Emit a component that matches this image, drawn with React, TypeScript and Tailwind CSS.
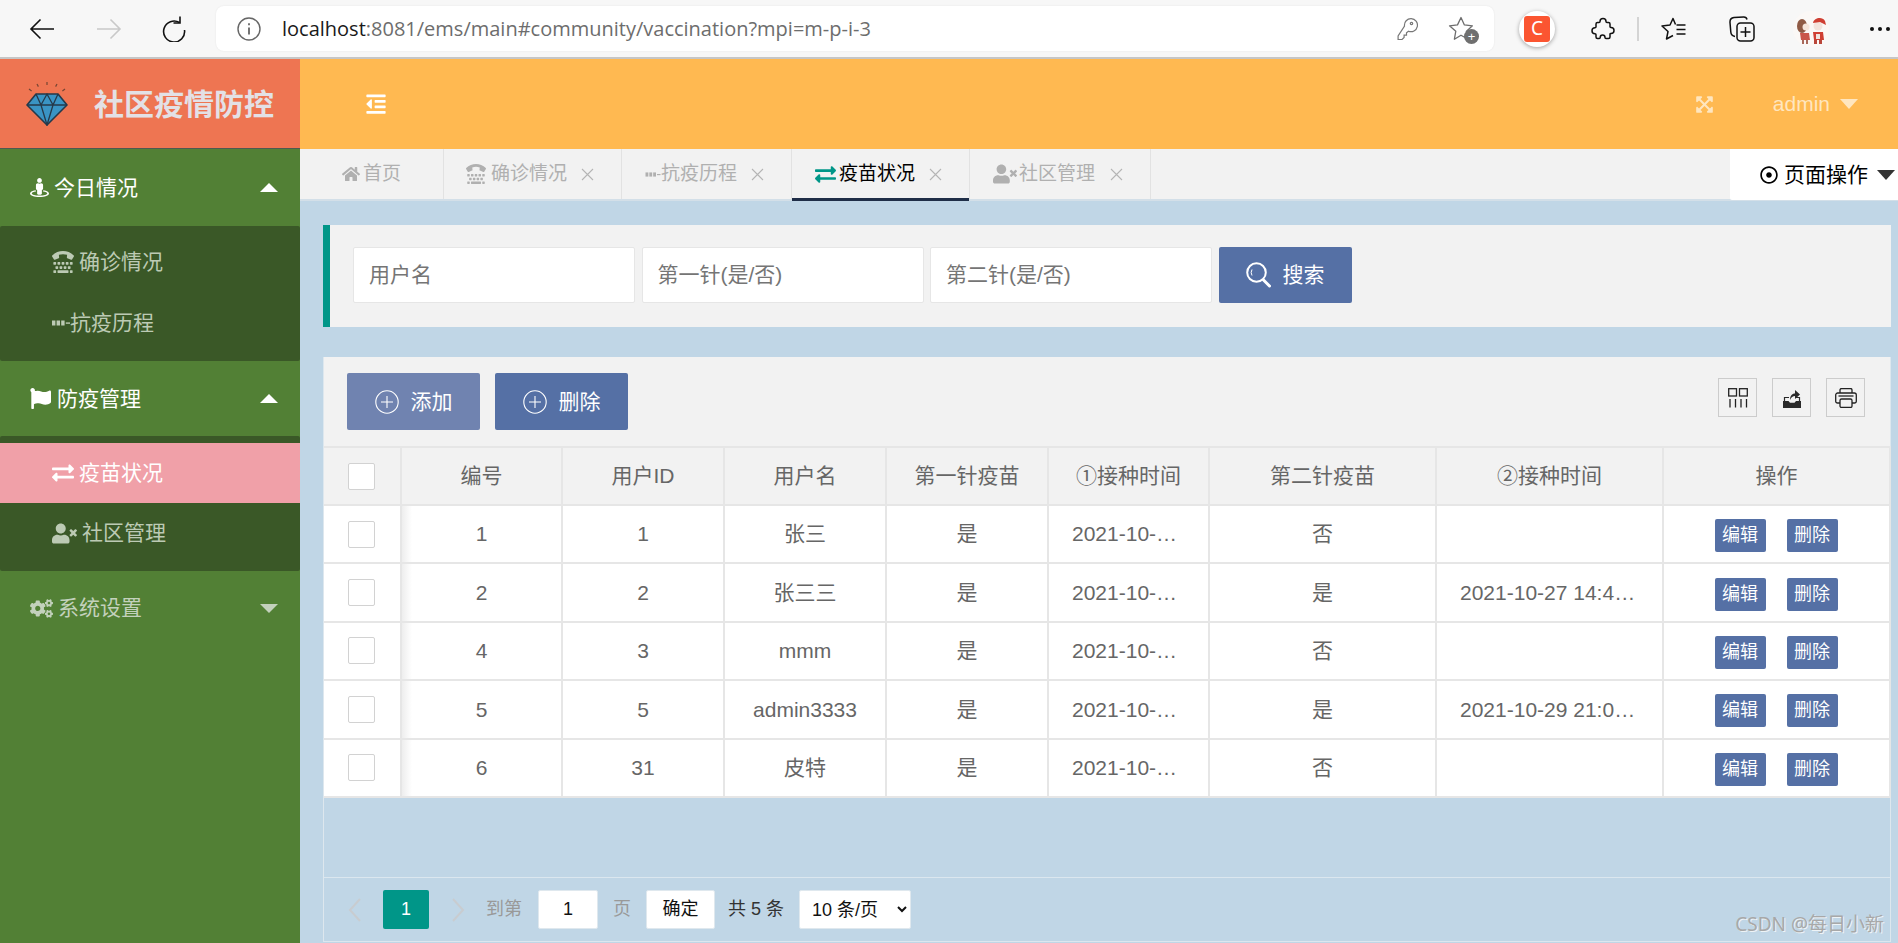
import { FaCogs, FaExchangeAlt, FaExpandArrowsAlt, FaFlag, FaHome, FaOutdent, FaRegDotCircle, FaStreetView, FaTty, FaUserTimes } from "react-icons/fa";

const rows = [
  { id: 1, uid: 1, name: "张三", first: "是", firstAt: "2021-10-26 10:00:00", second: "否", secondAt: "" },
  { id: 2, uid: 2, name: "张三三", first: "是", firstAt: "2021-10-26 10:00:00", second: "是", secondAt: "2021-10-27 14:42:11" },
  { id: 4, uid: 3, name: "mmm", first: "是", firstAt: "2021-10-27 09:30:00", second: "否", secondAt: "" },
  { id: 5, uid: 5, name: "admin3333", first: "是", firstAt: "2021-10-28 15:20:00", second: "是", secondAt: "2021-10-29 21:06:35" },
  { id: 6, uid: 31, name: "皮特", first: "是", firstAt: "2021-10-29 11:10:00", second: "否", secondAt: "" },
];

const headers = ["编号", "用户ID", "用户名", "第一针疫苗", "①接种时间", "第二针疫苗", "②接种时间", "操作"];

// the "抗疫历程" glyph: a few square dots running into a line
function DotsIcon({ className }: { className?: string }) {
  return (
    <svg viewBox="0 0 18 6" width="18" height="6" fill="currentColor" className={className}>
      <rect x="0" y="0.5" width="3.4" height="5" />
      <rect x="4.6" y="0.5" width="3.4" height="5" />
      <rect x="9.2" y="0.5" width="3.4" height="5" />
      <rect x="13.8" y="2.4" width="4.2" height="1.4" />
    </svg>
  );
}

function CloseIcon() {
  return (
    <svg viewBox="0 0 13 13" width="13" height="13" fill="none" stroke="#b5b5b5" strokeWidth="1.1">
      <path d="M1 1l11 11M12 1L1 12" />
    </svg>
  );
}

function PlusCircle() {
  return (
    <svg viewBox="0 0 24 24" width="24" height="24" fill="none" stroke="currentColor" strokeWidth="1.1">
      <circle cx="12" cy="12" r="11.2" />
      <path d="M12 6v12M6 12h12" />
    </svg>
  );
}

function Diamond() {
  return (
    <svg viewBox="0 0 42 44" width="42" height="44">
      <g stroke="#5a3a2c" strokeWidth="1.2" opacity="0.8">
        <path d="M21 0v3M11 2l1.4 2.6M31 2l-1.4 2.6M3 7l2.6 2M39 7l-2.6 2" />
      </g>
      <path d="M10 12h22l9 11-20 20L1 23z" fill="#3a94c4" stroke="#25394a" strokeWidth="1.6" strokeLinejoin="round" />
      <path d="M1 23h40M10 12l5 11 6 20 6-20 5-11M15 23l6-11 6 11" fill="none" stroke="#25394a" strokeWidth="1.3" />
    </svg>
  );
}

function BrowserBar() {
  return (
    <div className="flex h-[59px] shrink-0 items-start border-b-2 border-[#c6c6c6] bg-[#f7f7f7]">
      <div className="flex h-[57px] w-[216px] items-center pl-[30px] text-black">
        <svg viewBox="0 0 26 22" width="26" height="22" fill="none" stroke="#111" strokeWidth="1.6" className="ml-[-1px]">
          <path d="M25 11H2M11.5 1.5L2 11l9.5 9.5" />
        </svg>
        <svg viewBox="0 0 26 22" width="26" height="22" fill="none" stroke="#c9c9c9" strokeWidth="1.6" className="ml-[41px]">
          <path d="M1 11h23M14.5 1.5L24 11l-9.5 9.5" />
        </svg>
        <svg viewBox="0 0 26 26" width="26" height="26" fill="none" stroke="#111" strokeWidth="1.6" className="ml-[39px]">
          <path d="M18.500 6.500A10.500 10.500 0 1 0 23.500 14" />
          <path d="M19 0.500v6.500h-6.500" />
        </svg>
      </div>
      <div className="mt-[6px] flex h-[45px] w-[1278px] items-center rounded-lg bg-white pl-[21px] pr-[12px] shadow-[0_0_2px_rgba(0,0,0,0.08)]">
        <svg viewBox="0 0 24 24" width="24" height="24" fill="none" stroke="#666" strokeWidth="1.4">
          <circle cx="12" cy="12" r="11" />
          <path d="M12 10.5v7M12 6.3v2" strokeWidth="1.8" />
        </svg>
        <span className="ml-[21px] font-['Open_Sans','Noto_Sans',sans-serif] text-[20px] text-[#6d6d6d]">
          <span className="text-[#1a1a1a]">localhost</span>:8081/ems/main#community/vaccination?mpi=m-p-i-3
        </span>
        <svg viewBox="0 0 22 24" width="22" height="24" fill="none" stroke="#777" strokeWidth="1.2" className="ml-auto mr-[30px]">
          <path d="M9 9.5a6.5 6.5 0 1 1 4 5.2l-2 1.6v2.4H8.6V21l-2 2H2.6v-3.6z" transform="translate(-0.5 -0.5)" />
          <circle cx="15.5" cy="6.5" r="1.2" />
        </svg>
        <div className="relative mr-[6px] h-[26px] w-[28px]">
          <svg viewBox="0 0 28 26" width="28" height="26" fill="none" stroke="#6e6e6e" strokeWidth="1.3">
            <path d="M13 1.5l3.4 7.4 8 .9-5.9 5.4 1.6 8-7.1-4-6.6 4 1.4-8L1.5 9.8l8-.9z" strokeLinejoin="round" />
          </svg>
          <div className="absolute bottom-[-2px] right-[-3px] flex h-[15px] w-[15px] items-center justify-center rounded-full bg-[#6f6f6f] text-[13px] leading-none text-white">+</div>
        </div>
      </div>
      <div className="flex h-[57px] flex-1 items-center">
        <div className="ml-[25px] flex h-[36px] w-[36px] items-center justify-center rounded-full bg-white shadow-[0_1px_4px_rgba(0,0,0,0.35)]">
          <div className="flex h-[26px] w-[26px] items-center justify-center rounded-[3px] bg-[#fb5531] font-['Noto_Sans',sans-serif] text-[19px] leading-none text-white">C</div>
        </div>
        <svg viewBox="0 0 24 24" width="24" height="24" fill="none" stroke="#111" strokeWidth="1.5" className="ml-[36px]">
          <path d="M9 4.5a3 3 0 0 1 6 0c0 .6.4 1 1 1h1.5A1.5 1.5 0 0 1 19 7v2.5c0 .6.4 1 1 .9a3 3 0 0 1 0 6c-.6-.1-1 .3-1 .9V20a1.5 1.5 0 0 1-1.5 1.5H15c-.6 0-1-.4-1-1a2.4 2.4 0 0 0-4.800 0c0 .6-.4 1-1 1H6.500A1.500 1.500 0 0 1 5 20v-2.200c0-.6-.4-1-1-1a3 3 0 0 1 0-6c.6 0 1-.4 1-1V7a1.500 1.500 0 0 1 1.500-1.500H8c.6 0 1-.4 1-1z" />
        </svg>
        <div className="ml-[22px] h-[24px] w-[2px] bg-[#d4d4d4]" />
        <svg viewBox="0 0 26 24" width="26" height="24" fill="none" stroke="#111" strokeWidth="1.5" className="ml-[22px]">
          <path d="M14.500 7.500L12 1.500 9 8l-8 1 6 5.500L5.500 22l6.500-3.500" strokeLinejoin="round" />
          <path d="M15.500 8h9M15.500 12.500h9M15.500 17h9" />
        </svg>
        <svg viewBox="0 0 26 26" width="26" height="26" fill="none" stroke="#111" strokeWidth="1.5" className="ml-[42px]">
          <path d="M6 20.500C3.500 20 2 18.500 1.800 16L1 6.500C.8 3.500 2.500 1.800 5 1.500l9.500-.6c2-.1 3.200 1 3.500 2.600" />
          <rect x="8" y="7" width="17" height="18" rx="3.500" />
          <path d="M16.500 11v10M11.500 16h10" />
        </svg>
        <svg viewBox="0 0 36 36" width="36" height="36" className="ml-[38px]">
          <circle cx="18" cy="18" r="18" fill="#fbf8f6" />
          <ellipse cx="9" cy="15" rx="5" ry="7" fill="#8f5a45" />
          <circle cx="13" cy="16" r="3.500" fill="#f5e4da" />
          <path d="M7 22h9l1 7H8z" fill="#c9564a" />
          <path d="M9 29h2v4H9zM13 29h2v4h-2z" fill="#a9685a" />
          <circle cx="25" cy="15" r="4.500" fill="#f3e3dc" />
          <path d="M20 12c1-5 9-7 12-2l1 4-6-3z" fill="#cf3f33" />
          <path d="M20 21h10l1 8H21z" fill="#cf3f33" />
          <rect x="23" y="23" width="4" height="5" fill="#efe4de" />
          <path d="M21 29h3v4h-3zM26 29h3v4h-3z" fill="#b9463a" />
        </svg>
        <div className="ml-[41px] flex gap-[4px]">
          <div className="h-[4px] w-[4px] rounded-full bg-[#111]" />
          <div className="h-[4px] w-[4px] rounded-full bg-[#111]" />
          <div className="h-[4px] w-[4px] rounded-full bg-[#111]" />
        </div>
      </div>
    </div>
  );
}

function Sidebar() {
  return (
    <aside className="flex w-[300px] shrink-0 flex-col bg-[#528035] text-[21px]">
      <div className="flex h-[90px] shrink-0 items-center border-b border-[#4d5a50] bg-[#ee7552]">
        <div className="ml-[26px] mt-[1px]">
          <Diamond />
        </div>
        <span className="ml-[26px] mt-[2px] text-[30px] font-bold leading-none text-[#e3e1e6]">社区疫情防控</span>
      </div>

      <div className="flex h-[77px] items-center pl-[30px] pr-[22px] text-white">
        <FaStreetView size={19} className="mr-[5px]" />
        <span>今日情况</span>
        <div className="ml-auto border-x-[9px] border-b-[9px] border-x-transparent border-b-white" />
      </div>
      <div className="rounded-[2px] bg-[#3a5827] pb-[8px] pt-[6px] text-[#bccab4]">
        <div className="flex h-[60px] items-center pl-[52px]">
          <FaTty size={22} className="mr-[5px]" />
          <span>确诊情况</span>
        </div>
        <div className="flex h-[61px] items-center pl-[52px]">
          <DotsIcon />
          <span>抗疫历程</span>
        </div>
      </div>

      <div className="flex h-[75px] items-center pl-[30px] pr-[22px] text-white">
        <FaFlag size={21} className="mr-[6px]" />
        <span>防疫管理</span>
        <div className="ml-auto border-x-[9px] border-b-[9px] border-x-transparent border-b-white" />
      </div>
      <div className="rounded-[2px] bg-[#3a5827] pb-[8px] pt-[7px] text-[#bccab4]">
        <div className="flex h-[60px] items-center bg-[#f0a0a8] pl-[52px] text-white">
          <FaExchangeAlt size={22} className="mr-[5px]" />
          <span>疫苗状况</span>
        </div>
        <div className="flex h-[60px] items-center pl-[52px]">
          <FaUserTimes size={25} className="mr-[5px]" />
          <span>社区管理</span>
        </div>
      </div>

      <div className="flex h-[74px] items-center pl-[30px] pr-[22px] text-[#c3d1bc]">
        <FaCogs size={23} className="mr-[5px]" />
        <span>系统设置</span>
        <div className="ml-auto border-x-[9px] border-t-[9px] border-x-transparent border-t-[#c3d1bc]" />
      </div>
    </aside>
  );
}

function TopBar() {
  return (
    <div className="flex h-[90px] shrink-0 items-center bg-[#ffb951] pl-[65px] pr-[40px]">
      <FaOutdent size={22} className="text-white" />
      <FaExpandArrowsAlt size={19} className="ml-auto text-[#ffe6bf]" />
      <span className="ml-[59px] text-[21px] text-[#ffe6bf]">admin</span>
      <div className="ml-[10px] border-x-[9px] border-t-[10px] border-x-transparent border-t-[#ffe6bf]" />
    </div>
  );
}

function Tabs() {
  return (
    <div className="flex h-[52px] shrink-0 border-b-2 border-[#d3dfe8] bg-[#f2f2f2] text-[19px] text-[#b0b0b0]">
      <div className="flex w-[144px] items-center border-r border-[#e2e2e2] pl-[42px]">
        <FaHome size={18} className="mr-[3px]" />
        <span>首页</span>
      </div>
      <div className="flex w-[178px] items-center border-r border-[#e2e2e2] pl-[22px]">
        <FaTty size={20} className="mr-[5px]" />
        <span className="mr-[14px]">确诊情况</span>
        <CloseIcon />
      </div>
      <div className="flex w-[170px] items-center border-r border-[#e2e2e2] pl-[23px]">
        <DotsIcon className="h-[5px] w-[16px]" />
        <span className="mr-[14px]">抗疫历程</span>
        <CloseIcon />
      </div>
      <div className="mb-[-2px] flex w-[177px] items-center border-b-[3px] border-[#1f2e48] pl-[23px] pt-[1px] text-black">
        <FaExchangeAlt size={21} className="mr-[3px] text-[#009688]" />
        <span className="mr-[14px]">疫苗状况</span>
        <CloseIcon />
      </div>
      <div className="flex w-[182px] items-center border-x border-[#e2e2e2] pl-[23px]">
        <FaUserTimes size={24} className="mr-[2px]" />
        <span className="mr-[15px]">社区管理</span>
        <CloseIcon />
      </div>
      <div className="mb-[-1px] ml-auto flex w-[168px] items-center rounded-bl-[2px] bg-white pl-[30px] text-[21px] text-black">
        <FaRegDotCircle size={18} className="mr-[6px]" />
        <span>页面操作</span>
        <div className="ml-[9px] border-x-[9px] border-t-[10px] border-x-transparent border-t-[#333]" />
      </div>
    </div>
  );
}

function SearchPanel() {
  return (
    <div className="flex h-[102px] items-center gap-[6.5px] border-l-[7px] border-[#009688] bg-[#f2f2f2] pb-[2px] pl-[23px]">
      <input placeholder="用户名" className="h-[56px] w-[282px] rounded-[2px] border border-[#e6e6e6] bg-white pl-[15px] text-[21px] placeholder:text-[#757575]" />
      <input placeholder="第一针(是/否)" className="h-[56px] w-[282px] rounded-[2px] border border-[#e6e6e6] bg-white pl-[15px] text-[21px] placeholder:text-[#757575]" />
      <input placeholder="第二针(是/否)" className="h-[56px] w-[282px] rounded-[2px] border border-[#e6e6e6] bg-white pl-[15px] text-[21px] placeholder:text-[#757575]" />
      <button className="flex h-[56px] w-[133px] items-center justify-center gap-[12px] rounded-[2px] bg-[#5570a5] text-[21px] text-white">
        <svg viewBox="0 0 25 26" width="25" height="26" fill="none" stroke="currentColor" strokeWidth="2">
          <circle cx="10.500" cy="10.500" r="9.300" />
          <path d="M17.500 18l6 6" strokeWidth="3" strokeLinecap="round" />
          <path d="M6 7.500a6 6 0 0 0 0 6" strokeWidth="1" />
        </svg>
        搜索
      </button>
    </div>
  );
}

function Toolbar() {
  return (
    <div className="flex h-[89px] items-start bg-[#f2f2f2] pl-[23px] pr-[25px] pt-[16px]">
      <button className="flex h-[57px] w-[133px] items-center justify-center gap-[12px] rounded-[2px] bg-[#7083b0] text-[21px] text-white">
        <PlusCircle />
        添加
      </button>
      <button className="ml-[15px] flex h-[57px] w-[133px] items-center justify-center gap-[12px] rounded-[2px] bg-[#5570a5] text-[21px] text-white">
        <PlusCircle />
        删除
      </button>
      <div className="ml-auto mt-[5px] flex gap-[15px]">
        <div className="flex h-[39px] w-[39px] items-center justify-center border border-[#ccc]">
          <svg viewBox="0 0 20 20" width="20" height="20" fill="none" stroke="#222" strokeWidth="1.300">
            <rect x="0.700" y="0.700" width="7.800" height="7.300" />
            <rect x="11.500" y="0.700" width="7.800" height="7.300" />
            <path d="M2 11v8.500M7.500 11v8.500M13 11v8.500M18.500 11v8.500" />
          </svg>
        </div>
        <div className="flex h-[39px] w-[39px] items-center justify-center border border-[#ccc]">
          <svg viewBox="0 0 20 20" width="20" height="20">
            <path d="M1 13h5.500l1.500 1.800h4.500L14 13h5v7H1z" fill="#2a2a2a" />
            <path d="M2.500 13V9.500h4.500M14 9.500h3.500V13" fill="none" stroke="#2a2a2a" strokeWidth="1.200" />
            <path d="M8 12c0-4 2-6.500 5-6.500V2l5 4.500-5 4.500V8c-2 0-4 1.500-5 4z" fill="#2a2a2a" />
          </svg>
        </div>
        <div className="flex h-[39px] w-[39px] items-center justify-center border border-[#ccc]">
          <svg viewBox="0 0 22 20" width="22" height="20" fill="none" stroke="#222" strokeWidth="1.300">
            <path d="M5 5V2a1.500 1.500 0 0 1 1.500-1.500h9A1.500 1.500 0 0 1 17 2v3" />
            <path d="M5 15H2.500A1.800 1.800 0 0 1 .700 13.200V7A2 2 0 0 1 2.700 5h16.600a2 2 0 0 1 2 2v6.200a1.800 1.800 0 0 1-1.800 1.800H17" />
            <rect x="5" y="11" width="12" height="8.500" rx="1.500" />
            <path d="M3.500 8h15" />
          </svg>
        </div>
      </div>
    </div>
  );
}

function DataTable() {
  const cell = "border-b-2 border-r-2 border-[#e6e6e6] px-[23px] text-center";
  return (
    <table className="w-full table-fixed text-[21px] text-[#666]">
      <colgroup>
        <col className="w-[77px]" />
        <col className="w-[161px]" />
        <col className="w-[162px]" />
        <col className="w-[162px]" />
        <col className="w-[162px]" />
        <col className="w-[161px]" />
        <col className="w-[227px]" />
        <col className="w-[227px]" />
        <col className="w-[227px]" />
      </colgroup>
      <thead>
        <tr className="h-[58px] border-t-2 border-[#e6e6e6] bg-[#f2f2f2]">
          <th className="border-b-2 border-r-2 border-[#e6e6e6] pl-[24px] text-left">
            <div className="h-[27px] w-[27px] rounded-[2px] border border-[#d2d2d2] bg-white" />
          </th>
          {headers.map((h) => (
            <th key={h} className={`${cell} overflow-hidden whitespace-nowrap px-0 font-normal`}>
              {h}
            </th>
          ))}
        </tr>
      </thead>
      <tbody className="bg-white">
        {rows.map((r) => (
          <tr key={r.id} className="h-[58.400px]">
            <td className="border-b-2 border-r-2 border-[#e6e6e6] pl-[24px]">
              <div className="h-[27px] w-[27px] rounded-[2px] border border-[#d2d2d2] bg-white" />
            </td>
            <td className={`${cell} bg-gradient-to-r from-[#eeeeee] to-white bg-[length:10px_100%] bg-no-repeat`}>{r.id}</td>
            <td className={cell}>{r.uid}</td>
            <td className={cell}>{r.name}</td>
            <td className={cell}>{r.first}</td>
            <td className={`${cell} truncate`}>{r.firstAt}</td>
            <td className={cell}>{r.second}</td>
            <td className={`${cell} truncate`}>{r.secondAt}</td>
            <td className={`${cell} px-0`}>
              <div className="flex justify-center gap-[21px] pr-[1px] pt-[3px] text-[18px] text-white">
                <button className="h-[33px] w-[51px] rounded-[2px] bg-[#5570a5]">编辑</button>
                <button className="h-[33px] w-[51px] rounded-[2px] bg-[#5570a5]">删除</button>
              </div>
            </td>
          </tr>
        ))}
      </tbody>
    </table>
  );
}

function Pagination() {
  return (
    <div className="flex h-[64px] shrink-0 items-center border-t border-[#dbe7ef] pl-[24px] text-[18px] text-[#999]">
      <svg viewBox="0 0 13 24" width="13" height="24" fill="none" stroke="#c8ccd0" strokeWidth="2" className="mr-[22px]">
        <path d="M12 1L2 12l10 11" />
      </svg>
      <div className="flex h-[39px] w-[46px] items-center justify-center rounded-[2px] bg-[#009688] text-white">1</div>
      <svg viewBox="0 0 13 24" width="13" height="24" fill="none" stroke="#c8ccd0" strokeWidth="2" className="ml-[23px]">
        <path d="M1 1l10 11L1 23" />
      </svg>
      <span className="ml-[21px]">到第</span>
      <div className="ml-[16px] flex h-[39px] w-[60px] items-center justify-center rounded-[2px] border border-[#dfe8ee] bg-white text-[#111]">1</div>
      <span className="ml-[15px]">页</span>
      <button className="ml-[15px] h-[39px] w-[69px] rounded-[2px] border border-[#dfe8ee] bg-white text-[#111]">确定</button>
      <span className="ml-[13px] text-[#333]">共 5 条</span>
      <select defaultValue="10" className="ml-[15px] h-[39px] w-[112px] rounded-[2px] border border-[#dfe8ee] bg-white pl-[8px] text-[18px] text-[#111]">
        <option value="10">10 条/页</option>
        <option value="20">20 条/页</option>
      </select>
    </div>
  );
}

export default function App() {
  return (
    <div className="relative flex h-[943px] w-full flex-col overflow-hidden bg-[#c0d6e6] font-['Liberation_Sans','Noto_Sans_CJK_SC',sans-serif]">
      <BrowserBar />
      <div className="flex flex-1">
        <Sidebar />
        <main className="flex min-w-0 flex-1 flex-col">
          <TopBar />
          <Tabs />
          <div className="flex flex-1 flex-col gap-[30px] pb-[1px] pl-[23px] pr-[7px] pt-[24px]">
            <SearchPanel />
            <div className="flex flex-1 flex-col border-x border-b border-[#dde7ee]">
              <Toolbar />
              <DataTable />
              <div className="flex-1" />
              <Pagination />
            </div>
          </div>
        </main>
      </div>
      <div className="absolute bottom-[5px] right-[14px] font-['Noto_Sans','Noto_Sans_CJK_SC',sans-serif] text-[19px] text-[#a8a8a8] [text-shadow:1px_1px_0_#eef3f6]">
        CSDN @每日小新
      </div>
    </div>
  );
}
